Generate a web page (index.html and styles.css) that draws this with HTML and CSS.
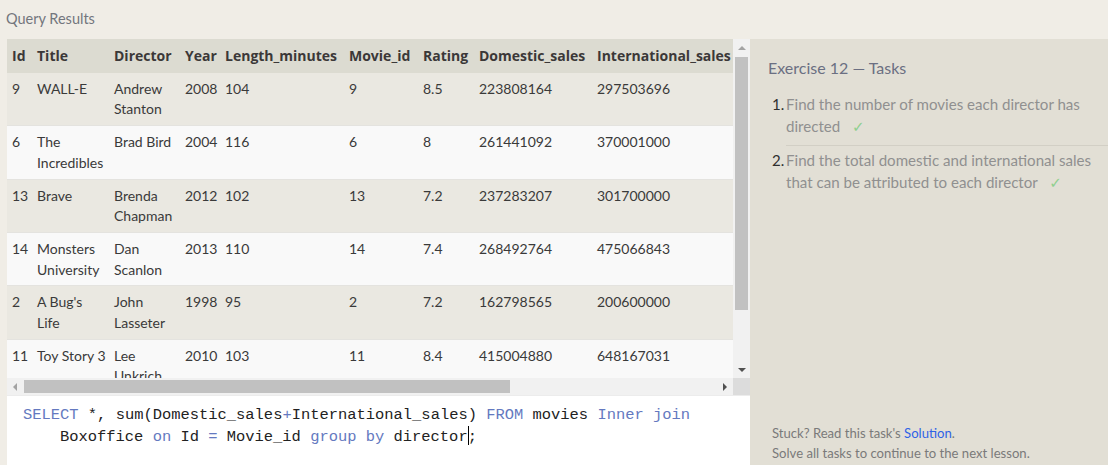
FILE: index.html
```html
<!DOCTYPE html>
<html>
<head>
<meta charset="utf-8">
<link rel="stylesheet" href="styles.css">
</head>
<body>
<div class="app">
  <header class="top">Query Results</header>
  <div class="main">
    <section class="left">
      <div class="results">
        <div class="viewport">
          <table class="grid">
            <colgroup>
              <col class="c-id"><col class="c-title"><col class="c-dir"><col class="c-year"><col class="c-len"><col class="c-mid"><col class="c-rate"><col class="c-dom"><col class="c-int"><col class="c-sum">
            </colgroup>
            <thead>
              <tr><th>Id</th><th>Title</th><th>Director</th><th>Year</th><th>Length_minutes</th><th>Movie_id</th><th>Rating</th><th>Domestic_sales</th><th>International_sales</th><th>sum(Domestic_sales+International_sales)</th></tr>
            </thead>
            <tbody>
              <tr class="odd"><td>9</td><td>WALL-E</td><td>Andrew Stanton</td><td>2008</td><td>104</td><td>9</td><td>8.5</td><td>223808164</td><td>297503696</td><td>521311860</td></tr>
              <tr class="even"><td>6</td><td>The Incredibles</td><td>Brad Bird</td><td>2004</td><td>116</td><td>6</td><td>8</td><td>261441092</td><td>370001000</td><td>631442092</td></tr>
              <tr class="odd"><td>13</td><td>Brave</td><td>Brenda Chapman</td><td>2012</td><td>102</td><td>13</td><td>7.2</td><td>237283207</td><td>301700000</td><td>538983207</td></tr>
              <tr class="even"><td>14</td><td>Monsters University</td><td>Dan Scanlon</td><td>2013</td><td>110</td><td>14</td><td>7.4</td><td>268492764</td><td>475066843</td><td>743559607</td></tr>
              <tr class="odd"><td>2</td><td>A Bug's Life</td><td>John Lasseter</td><td>1998</td><td>95</td><td>2</td><td>7.2</td><td>162798565</td><td>200600000</td><td>363398565</td></tr>
              <tr class="even"><td>11</td><td class="nowrap">Toy Story 3</td><td>Lee Unkrich</td><td>2010</td><td>103</td><td>11</td><td>8.4</td><td>415004880</td><td>648167031</td><td>1063171911</td></tr>
            </tbody>
          </table>
        </div>
        <div class="vscroll">
          <div class="arrow arrow-up"></div>
          <div class="vtrack"><div class="vthumb"></div></div>
          <div class="arrow arrow-down"></div>
        </div>
        <div class="hscroll">
          <div class="arrow arrow-left"></div>
          <div class="htrack"><div class="hthumb"></div></div>
          <div class="arrow arrow-right"></div>
        </div>
        <div class="corner"></div>
      </div>
      <div class="editor">
        <div class="code-line"><span class="kw">SELECT</span> *, sum(Domestic_sales<span class="kw">+</span>International_sales) <span class="kw">FROM</span> movies <span class="kw">Inner</span> <span class="kw">join</span></div>
        <div class="code-line wrapped">Boxoffice <span class="kw">on</span> Id <span class="kw">=</span> Movie_id <span class="kw">group</span> <span class="kw">by</span> director<span class="caret"></span>;</div>
      </div>
    </section>
    <aside class="tasks">
      <h2 class="tasks-title">Exercise 12 — Tasks</h2>
      <ol class="task-list">
        <li class="task"><span class="num">1.</span><span class="task-text">Find the number of movies each director has directed <span class="check">✓</span></span></li>
        <li class="task"><span class="num">2.</span><span class="task-text">Find the total domestic and international sales that can be attributed to each director <span class="check">✓</span></span></li>
      </ol>
      <div class="help">
        <p>Stuck? Read this task's <a class="link">Solution</a>.</p>
        <p>Solve all tasks to continue to the next lesson.</p>
      </div>
    </aside>
  </div>
</div>
</body>
</html>
```

FILE: styles.css
```css
* { box-sizing: border-box; }
html, body { margin: 0; padding: 0; }
body {
  background: #f0ede6;
  font-family: "Lato", "Noto Sans", sans-serif;
  color: #3a3a3a;
  width: 1108px;
  height: 465px;
  overflow: hidden;
}
.app { display: flex; flex-direction: column; height: 465px; }
.top {
  height: 39px;
  flex: none;
  padding: 9px 0 0 6px;
  font-size: 14.5px;
  color: #73767d;
  line-height: 20px;
}
.main { flex: 1; display: flex; padding-left: 7px; min-height: 0; }
.left { width: 743px; display: flex; flex-direction: column; background: #fff; }
.results {
  display: grid;
  grid-template-columns: 726px 17px;
  grid-template-rows: 339px 17px;
}
.viewport { overflow: hidden; background: #f9f9f9; }
.grid {
  border-collapse: collapse;
  table-layout: fixed;
  width: 1060px;
  font-size: 14px;
}
.c-id { width: 25px; }
.c-title { width: 77px; }
.c-dir { width: 71px; }
.c-year { width: 40px; }
.c-len { width: 124px; }
.c-mid { width: 74px; }
.c-rate { width: 56px; }
.c-dom { width: 118px; }
.c-int { width: 150px; }
.c-sum { width: 325px; }
.grid th, .grid td {
  text-align: left;
  vertical-align: top;
  padding: 6px 5px 5px;
  line-height: 20.7px;
}
.grid td.nowrap { white-space: nowrap; }
.grid th {
  background: #dcdbd1;
  font-family: "Open Sans", "Noto Sans", sans-serif;
  font-weight: 700;
  font-size: 14px;
  color: #3b3838;
  padding: 7px 5px 6px;
  white-space: nowrap;
  overflow: hidden;
}
.grid td { border-bottom: 1px solid #e4e3df; }
.odd td { background: #eae8e1; }
.even td { background: #f9f9f9; }

.vscroll { background: #f1f1f1; display: flex; flex-direction: column; }
.vtrack { flex: 1; position: relative; }
.vthumb { position: absolute; left: 2px; right: 2px; top: 1px; height: 253px; background: #c1c1c1; }
.hscroll { background: #f1f1f1; display: flex; }
.htrack { flex: 1; position: relative; }
.hthumb { position: absolute; top: 2px; bottom: 2px; left: 0; width: 486px; background: #c1c1c1; }
.corner { background: #dcdcdc; }
.arrow { width: 17px; height: 17px; position: relative; flex: none; }
.arrow::after { content: ""; position: absolute; width: 0; height: 0; border: 4px solid transparent; }
.arrow-up::after { left: 4.5px; top: 3px; border-bottom-color: #a3a3a3; }
.arrow-down::after { left: 4.5px; top: 7px; border-top-color: #505050; }
.arrow-left::after { left: 2px; top: 4.5px; border-right-color: #a3a3a3; }
.arrow-right::after { left: 7px; top: 4.5px; border-left-color: #505050; }

.editor {
  flex: 1;
  background: #fff;
  border-top: 1px solid #ececec;
  padding: 9px 0 0 16px;
  font-family: "Liberation Mono", "DejaVu Sans Mono", monospace;
  font-size: 15.45px;
  line-height: 21px;
  color: #222;
}
.code-line { white-space: pre; }
.code-line.wrapped { padding-left: 37px; }
.kw { color: #6479c0; }
.caret { display: inline-block; width: 1px; height: 19px; background: #000; vertical-align: -4px; margin-right: -1px; }

.tasks {
  flex: 1;
  background: #e2dfd5;
  display: flex;
  flex-direction: column;
  padding: 18px 0 0 0;
}
.tasks-title {
  margin: 0 0 0 18px;
  font-weight: 400;
  font-size: 16px;
  line-height: 22px;
  color: #6b6f82;
}
.task-list { list-style: none; margin: 11px 0 0 0; padding: 0; }
.task { display: flex; }
.num { width: 36px; flex: none; text-align: left; padding-left: 22px; color: #2f2f2f; font-size: 15px; line-height: 22px; padding-top: 3px; }
.task-text {
  flex: 1;
  color: #909090;
  font-size: 15.1px;
  line-height: 22px;
  padding: 3px 10px 7px 0;
  border-bottom: 1px solid #d2cfc5;
}
.task:last-child .task-text { border-bottom: none; }
.check { color: #8fcf8f; margin-left: 8px; font-family: "DejaVu Sans", sans-serif; font-size: 15px; }
.help { margin-top: auto; padding: 0 0 2px 22px; font-size: 13.1px; line-height: 20px; color: #7a7a7a; }
.help p { margin: 0; }
.link { color: #2f63e6; text-decoration: none; }
```
